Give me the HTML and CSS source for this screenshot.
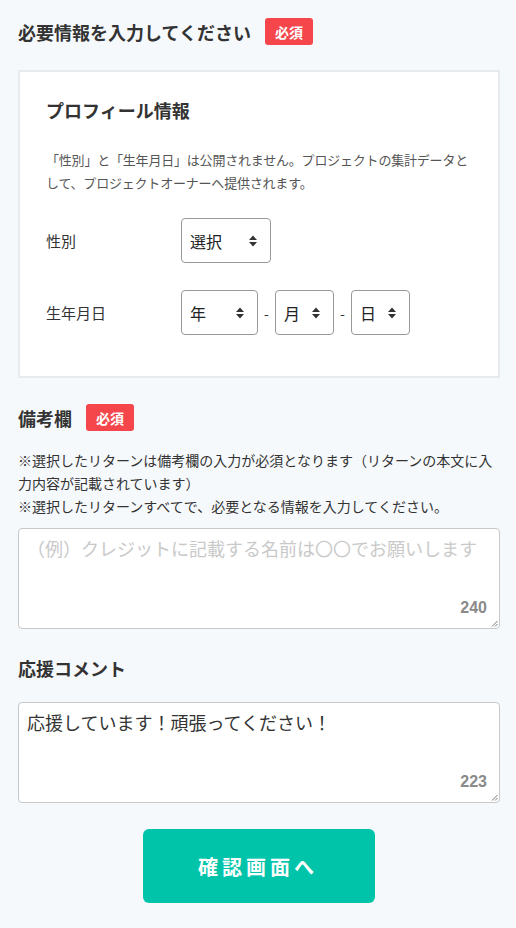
FILE: index.html
```html
<!DOCTYPE html>
<html lang="ja">
<head>
<meta charset="utf-8">
<title>必要情報</title>
<link rel="stylesheet" href="styles.css">
</head>
<body>
<main class="page">
  <div class="head head-top">
    <h2 class="head-title">必要情報を入力してください</h2>
    <span class="badge">必須</span>
  </div>

  <section class="card">
    <h3 class="card-title">プロフィール情報</h3>
    <p class="card-desc">「性別」と「生年月日」は公開されません。プロジェクトの集計データとして、プロジェクトオーナーへ提供されます。</p>
    <div class="row row-first">
      <div class="label">性別</div>
      <div class="select sel-gender"><span>選択</span>
        <svg class="arrow" width="10" height="12" viewBox="0 0 10 12"><path d="M5 0.5L9 5H1Z M5 11.5L1 7H9Z" fill="#333"/></svg>
      </div>
    </div>
    <div class="row">
      <div class="label">生年月日</div>
      <div class="dates">
        <div class="select sel-year"><span>年</span>
          <svg class="arrow" width="10" height="12" viewBox="0 0 10 12"><path d="M5 0.5L9 5H1Z M5 11.5L1 7H9Z" fill="#333"/></svg>
        </div>
        <span class="dash">-</span>
        <div class="select sel-md"><span>月</span>
          <svg class="arrow" width="10" height="12" viewBox="0 0 10 12"><path d="M5 0.5L9 5H1Z M5 11.5L1 7H9Z" fill="#333"/></svg>
        </div>
        <span class="dash">-</span>
        <div class="select sel-md"><span>日</span>
          <svg class="arrow" width="10" height="12" viewBox="0 0 10 12"><path d="M5 0.5L9 5H1Z M5 11.5L1 7H9Z" fill="#333"/></svg>
        </div>
      </div>
    </div>
  </section>

  <div class="head head-note">
    <h2 class="head-title">備考欄</h2>
    <span class="badge">必須</span>
  </div>
  <p class="notes">※選択したリターンは備考欄の入力が必須となります（リターンの本文に入力内容が記載されています）<br>※選択したリターンすべてで、必要となる情報を入力してください。</p>
  <div class="textbox textbox-note">
    <div class="placeholder">（例）クレジットに記載する名前は〇〇でお願いします</div>
    <span class="count">240</span>
    <svg class="grip" width="7" height="7" viewBox="0 0 7 7"><path d="M6.5 1L1 6.5M6.5 4L4 6.5" stroke="#777" stroke-width="1"/></svg>
  </div>

  <div class="head head-comment">
    <h2 class="head-title">応援コメント</h2>
  </div>
  <div class="textbox">
    <div class="value">応援しています！頑張ってください！</div>
    <span class="count">223</span>
    <svg class="grip" width="7" height="7" viewBox="0 0 7 7"><path d="M6.5 1L1 6.5M6.5 4L4 6.5" stroke="#777" stroke-width="1"/></svg>
  </div>

  <div class="actions">
    <button class="btn" type="button">確認画面へ</button>
  </div>
</main>
</body>
</html>
```

FILE: styles.css
```css
* { box-sizing: border-box; }
html, body { margin: 0; padding: 0; }
body {
  background: #f6f9fc;
  color: #333;
  font-family: "Noto Sans CJK JP", "Noto Sans", sans-serif;
}
.page {
  padding: 18px 16px 25px 18px;
}
.head {
  display: flex;
  align-items: center;
  height: 27px;
}
.head-title {
  margin: 0;
  font-size: 18px;
  font-weight: 700;
  line-height: 26px;
  color: #333;
}
.badge {
  display: inline-flex;
  align-items: center;
  justify-content: center;
  height: 27px;
  padding: 0 10px;
  margin-left: 14px;
  background: #f5474b;
  color: #fff;
  font-size: 14px;
  font-weight: 700;
  border-radius: 3px;
}
.card {
  margin-top: 25px;
  background: #fff;
  border: 2px solid #e7eaee;
  padding: 25px 18px 41px 26px;
}
.card-title {
  margin: 0;
  font-size: 18px;
  font-weight: 700;
  line-height: 26px;
  color: #333;
}
.card-desc {
  margin: 25px 0 0;
  font-size: 13px;
  line-height: 23px;
  letter-spacing: -0.2px;
  color: #555;
}
.row {
  display: flex;
  align-items: center;
  margin-top: 27px;
}
.row-first { margin-top: 24px; }
.label {
  width: 135px;
  font-size: 15px;
  color: #333;
}
.dates {
  display: flex;
  align-items: center;
}
.select {
  display: flex;
  align-items: center;
  justify-content: space-between;
  height: 45px;
  padding: 0 12px 0 8px;
  border: 1px solid #999;
  border-radius: 4px;
  background: #fff;
  font-size: 16px;
  color: #222;
}
.sel-gender { width: 90px; }
.sel-year { width: 77px; }
.sel-md { width: 59px; }
.arrow { display: block; }
.dash {
  width: 17px;
  text-align: center;
  font-size: 14px;
  color: #333;
}
.head-note { margin-top: 26px; }
.notes {
  margin: 18px 0 0;
  font-size: 14px;
  line-height: 23px;
  color: #333;
}
.textbox {
  position: relative;
  height: 101px;
  margin-top: 10px;
  background: #fff;
  border: 1px solid #c8c8c8;
  border-radius: 4px;
  padding: 6px 8px;
  font-size: 18px;
  line-height: 26px;
}
.placeholder { color: #c9c9c9; }
.value { color: #333; }
.count {
  position: absolute;
  right: 12px;
  bottom: 10px;
  font-family: "Liberation Sans", Arial, sans-serif;
  font-size: 16px;
  font-weight: 700;
  line-height: 20px;
  color: #8a8a8a;
}
.grip {
  position: absolute;
  right: 1px;
  bottom: 1px;
}
.head-comment { margin-top: 26px; height: 26px; }
.head-comment + .textbox { margin-top: 21px; }
.actions {
  display: flex;
  justify-content: center;
  margin-top: 26px;
}
.btn {
  width: 232px;
  height: 74px;
  border: 0;
  border-radius: 6px;
  background: #00c4aa;
  color: #fff;
  font-family: "Noto Sans CJK JP", "Noto Sans", sans-serif;
  font-size: 20px;
  font-weight: 700;
  letter-spacing: 4px;
  padding-left: 4px;
}
```
